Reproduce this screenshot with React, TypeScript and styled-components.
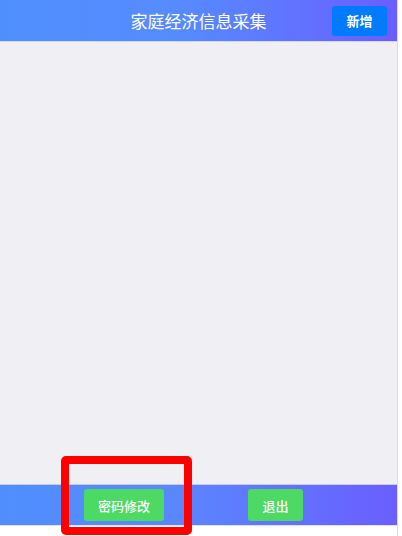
import React from "react";
import styled, { createGlobalStyle } from "styled-components";

const Global = createGlobalStyle`
  html, body { margin: 0; padding: 0; background: #ffffff; }
  body { font-family: "Noto Sans CJK SC", "Liberation Sans", sans-serif; }
  * { box-sizing: border-box; }
`;

const Page = styled.div`
  position: relative;
  width: 398px;
  height: 536px;
  display: flex;
  flex-direction: column;
  border-right: 1px solid #dcdce0;
  background: #ffffff;
`;

const Header = styled.header`
  height: 42px;
  flex: none;
  display: grid;
  grid-template-columns: 1fr auto 1fr;
  align-items: center;
  background: linear-gradient(90deg, #4f8ffd 0%, #568bff 45%, #6a5eff 100%);
  border-bottom: 1px solid #d6d8f2;
`;

const Title = styled.h1`
  grid-column: 2;
  margin: 0;
  font-size: 17px;
  font-weight: 400;
  color: #ffffff;
  letter-spacing: 0;
`;

const Actions = styled.div`
  grid-column: 3;
  display: flex;
  justify-content: flex-end;
  padding-right: 10px;
`;

const Button = styled.button<{ $tone: "blue" | "green"; $w: number }>`
  width: ${(p) => p.$w}px;
  height: ${(p) => (p.$tone === "blue" ? 30 : 32)}px;
  border: none;
  border-radius: 3px;
  background: ${(p) => (p.$tone === "blue" ? "#007aff" : "#4cd964")};
  color: #ffffff;
  font-family: "Noto Sans CJK SC", "Liberation Sans", sans-serif;
  font-size: 13px;
  font-weight: ${(p) => (p.$tone === "blue" ? 700 : 500)};
  padding: 0;
  display: flex;
  align-items: center;
  justify-content: center;
`;

const Main = styled.main`
  flex: 1;
  background: #efeff4;
`;

const Footer = styled.footer`
  height: 42px;
  flex: none;
  display: flex;
  align-items: center;
  gap: 84px;
  padding-left: 84px;
  background: linear-gradient(90deg, #4f8ffd 0%, #5a86ff 45%, #6a5eff 100%);
  border-top: 1px solid #c8cae6;
  border-bottom: 1px solid #e2e2e8;
`;

const Bottom = styled.div`
  height: 10px;
  flex: none;
  background: #ffffff;
`;

const Highlight = styled.div`
  position: absolute;
  left: 61px;
  top: 456px;
  width: 131px;
  height: 79px;
  border: 8px solid #ff0000;
  border-radius: 5px;
  pointer-events: none;
`;

export default function App() {
  return (
    <>
      <Global />
      <Page>
        <Header>
          <Title>家庭经济信息采集</Title>
          <Actions>
            <Button $tone="blue" $w={55}>新增</Button>
          </Actions>
        </Header>
        <Main />
        <Footer>
          <Button $tone="green" $w={80}>密码修改</Button>
          <Button $tone="green" $w={55}>退出</Button>
        </Footer>
        <Bottom />
        <Highlight />
      </Page>
    </>
  );
}
